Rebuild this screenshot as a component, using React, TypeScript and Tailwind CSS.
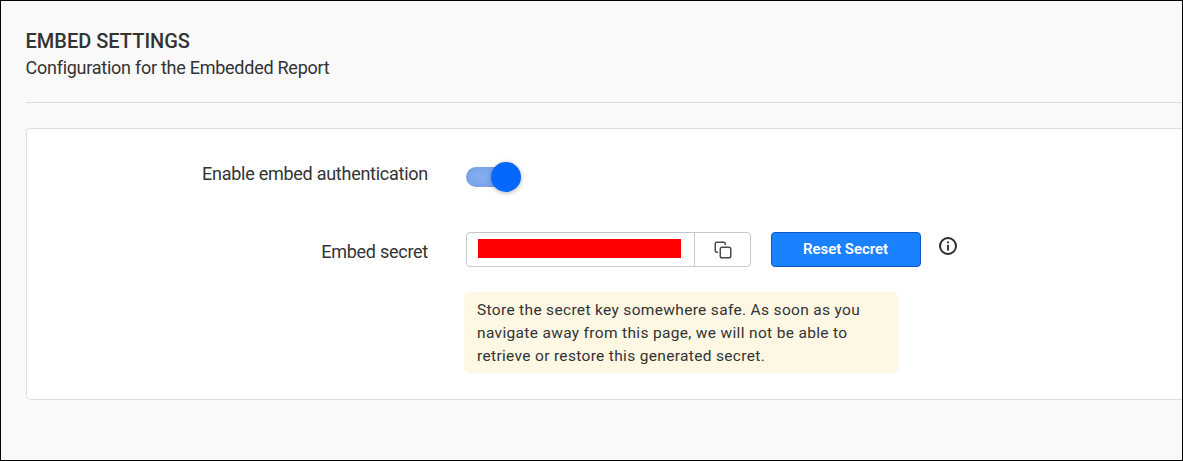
import React from "react";

function CopyIcon() {
  return (
    <svg width="18" height="18" viewBox="0 0 18 18" fill="none" stroke="#4a4a4a" strokeWidth="1.5" strokeLinecap="round" strokeLinejoin="round">
      <rect x="6.25" y="6.25" width="10.5" height="10.5" rx="1.8" />
      <path d="M3.5 11.25h-.7A1.6 1.6 0 0 1 1.25 9.7V2.8A1.6 1.6 0 0 1 2.8 1.25h6.9a1.6 1.6 0 0 1 1.55 1.55v.7" />
    </svg>
  );
}

function InfoIcon() {
  return (
    <svg width="18" height="18" viewBox="0 0 18 18" fill="none">
      <circle cx="9" cy="9" r="8" stroke="#2b2b2b" strokeWidth="2" />
      <rect x="8.1" y="4.4" width="1.8" height="1.9" fill="#2b2b2b" />
      <rect x="8.1" y="7.8" width="1.8" height="5.8" fill="#2b2b2b" />
    </svg>
  );
}

function Toggle() {
  return (
    <button role="switch" aria-checked="true" aria-label="Enable embed authentication" className="flex h-[30px] w-[55px] items-center">
      <span className="h-5 w-[48px] shrink-0 rounded-full bg-[#82acf3] shadow-[inset_0_0_8px_rgba(0,0,0,0.12)]" />
      <span className="-ml-[23px] h-[30px] w-[30px] shrink-0 rounded-full bg-[#0468ff] shadow-[0_1px_5px_rgba(0,0,0,0.3)]" />
    </button>
  );
}

export default function App() {
  return (
    <div className="h-[461px] w-[1183px] overflow-hidden border border-black bg-[#f9f9f9] pl-[25px] font-['Roboto',sans-serif] text-[#333]">
      <header className="h-[102px] border-b border-[#dedede] pt-[27px]">
        <h1 className="-ml-[0.5px] text-[20px] leading-[26px] font-medium">EMBED SETTINGS</h1>
        <p className="-ml-[0.5px] pt-px text-[18px] leading-[26px] tracking-[-0.26px]">Configuration for the Embedded Report</p>
      </header>
      <main className="mt-[25px] h-[272px] rounded-l-[5px] border border-r-0 border-[#dcdfe3] bg-white">
        <div className="flex pt-[33px]">
          <div className="w-[401px] text-right text-[18px] leading-6 tracking-[-0.26px]">Enable embed authentication</div>
          <div className="ml-[38px]">
            <Toggle />
          </div>
        </div>
        <div className="mt-10 flex">
          <div className="w-[401px] pt-[8px] text-right text-[18px] leading-6 tracking-[-0.26px]">Embed secret</div>
          <div className="ml-[38px] flex h-[35px] w-[285px] rounded-[4px] border border-[#c8c8c8]">
            <div className="w-[228px] border-r border-[#c8c8c8] pt-[6px] pl-[11px]">
              <div className="h-[19px] w-[203px] bg-[#ff0000]" />
            </div>
            <button aria-label="Copy" className="flex flex-1 items-center justify-center pt-px pl-px">
              <CopyIcon />
            </button>
          </div>
          <button className="ml-5 h-[35px] w-[150px] rounded-[4px] border border-[#0c56c9] bg-[#1a81ff] pr-px text-[15px] font-semibold tracking-[-0.04px] text-white">
            Reset Secret
          </button>
          <div className="ml-[18px] pt-[5px]">
            <InfoIcon />
          </div>
        </div>
        <p className="mt-[25px] ml-[437px] h-[81px] w-[434px] rounded-[5px] bg-[#fdf7e3] px-[13px] pt-[7px] text-[15.5px] leading-[23px] tracking-[0.33px]">
          Store the secret key somewhere safe. As soon as you<br />
          navigate away from this page, we will not be able to<br />
          retrieve or restore this generated secret.
        </p>
      </main>
    </div>
  );
}
